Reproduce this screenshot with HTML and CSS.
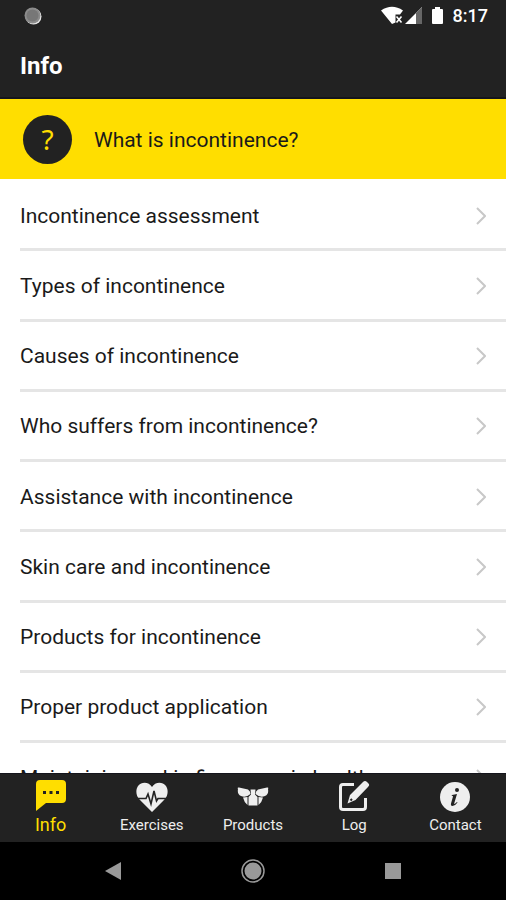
FILE: index.html
```html
<!DOCTYPE html>
<html lang="en">
<head>
<meta charset="utf-8">
<meta name="viewport" content="width=device-width, initial-scale=1">
<title>Info</title>
<link rel="stylesheet" href="styles.css">
</head>
<body>
<div class="app">
  <div class="status">
    <svg class="dot" width="20" height="20" viewBox="0 0 20 20" aria-hidden="true"><circle cx="10.500" cy="10.500" r="8" fill="#e6e6e6"/><circle cx="9.500" cy="9.500" r="8" fill="#8c8c8c"/><circle cx="9.500" cy="9.500" r="6" fill="#777"/></svg>
    <div class="status-icons">
      <svg width="64" height="22" viewBox="0 0 64 22" aria-hidden="true">
        <path d="M0 5.500Q11-2 22 5.500L19 9.500H14.500V17.500L11 19Z" fill="#fff"/>
        <path d="M15.500 11.500l5 6M20.500 11.500l-5 6" stroke="#fff" stroke-width="1.600"/>
        <path d="M24 19L41 2V19Z" fill="#fff"/><path d="M35 8L41 2V19H35Z" fill="#666"/>
        <path d="M54 2h5v2h2q1 0 1 1v13q0 1-1 1H52q-1 0-1-1V5q0-1 1-1h2Z" fill="#fff"/>
      </svg>
      <span class="clock">8:17</span>
    </div>
  </div>
  <header class="bar"><h1>Info</h1></header>
  <a class="feature" href="#what"><span class="badge">?</span><span>What is incontinence?</span></a>
  <main class="list">
    <a href="#assessment">Incontinence assessment<svg class="chev" viewBox="0 0 10 18"><path d="M1 1l8 8-8 8"/></svg></a>
    <a href="#types">Types of incontinence<svg class="chev" viewBox="0 0 10 18"><path d="M1 1l8 8-8 8"/></svg></a>
    <a href="#causes">Causes of incontinence<svg class="chev" viewBox="0 0 10 18"><path d="M1 1l8 8-8 8"/></svg></a>
    <a href="#who">Who suffers from incontinence?<svg class="chev" viewBox="0 0 10 18"><path d="M1 1l8 8-8 8"/></svg></a>
    <a href="#assistance">Assistance with incontinence<svg class="chev" viewBox="0 0 10 18"><path d="M1 1l8 8-8 8"/></svg></a>
    <a href="#skin">Skin care and incontinence<svg class="chev" viewBox="0 0 10 18"><path d="M1 1l8 8-8 8"/></svg></a>
    <a href="#products-for">Products for incontinence<svg class="chev" viewBox="0 0 10 18"><path d="M1 1l8 8-8 8"/></svg></a>
    <a href="#application">Proper product application<svg class="chev" viewBox="0 0 10 18"><path d="M1 1l8 8-8 8"/></svg></a>
    <a class="peek" href="#maintain">Maintaining a skin firm, even in health<svg class="chev" viewBox="0 0 10 18"><path d="M1 1l8 8-8 8"/></svg></a>
  </main>
  <nav class="tabs">
    <a class="active" href="#info"><svg viewBox="0 0 32 32"><path d="M5 0H27Q31 0 31 4V19Q31 23 27 23H11L1 31V4Q1 0 5 0Z" fill="#ffde00"/><path d="M8 11h3v3H8zM14.500 11h3v3h-3zM21 11h3v3h-3z" fill="#222"/></svg>Info</a>
    <a href="#exercises"><svg viewBox="0 0 32 32"><path d="M16 32L4 20C-1 15 0 9 2 6C6 1 13 2 16 7C19 2 26 1 30 6C32 9 33 15 28 20Z" fill="#eee"/><path d="M0 18.500H10L12 14L15 24L18 11L20.500 21L22 18.500H32" fill="none" stroke="#222" stroke-width="1.600"/></svg>Exercises</a>
    <a href="#products"><svg viewBox="0 0 32 32"><path d="M1 9Q0 7 2 7.500L11 9.500Q13.500 11 13.500 14Q9 18 4 16Q0 14 1 9ZM31 9Q32 7 30 7.500L21 9.500Q18.500 11 18.500 14Q23 18 28 16Q32 14 31 9Z" fill="#eee"/><path d="M13.500 9.500h5l-.5 5 2.500 2.500v8.500h-9V17l2.500-2.500Z" fill="#eee"/><path d="M6 17.500l4.500-.5v8Q7 22 6 17.500ZM26 17.500l-4.500-.5v8Q25 22 26 17.500Z" fill="#eee"/></svg>Products</a>
    <a href="#log"><svg viewBox="0 0 32 32"><path d="M16 4.500H5Q2.500 4.500 2.500 7V27Q2.500 29.500 5 29.500H25Q27.500 29.500 27.500 27V18" fill="none" stroke="#eee" stroke-width="3"/><path d="M9.500 23.500L12 15L25 2Q27 0 29 2L30.500 3.500Q32 5 30 7L17.500 20Z" fill="#eee"/><path d="M12.500 20.500l1.500-1.500" stroke="#222" stroke-width="2"/></svg>Log</a>
    <a href="#contact"><svg viewBox="0 0 32 32"><circle cx="16" cy="17" r="15" fill="#eee"/><circle cx="18" cy="10" r="2" fill="#222"/><path d="M13 15l5-1-3 10q1 0 3-2l.5.500Q16 26 13.500 26q-2 0-1.500-2.500l2-7q0-1-1.500-.800Z" fill="#222"/></svg>Contact</a>
  </nav>
  <div class="system">
    <button aria-label="Back"><svg viewBox="0 0 24 24"><path d="M4 12L20 3V21Z" fill="#999"/></svg></button>
    <button aria-label="Home"><svg viewBox="0 0 24 24"><circle cx="12" cy="12" r="11" fill="none" stroke="#999" stroke-width="1.500"/><circle cx="12" cy="12" r="8.500" fill="#999"/></svg></button>
    <button aria-label="Recent apps"><svg viewBox="0 0 24 24"><path d="M4 4h16v16H4z" fill="#999"/></svg></button>
  </div>
</div>
</body>
</html>
```

FILE: styles.css
```css
* { box-sizing: border-box; }
body { margin: 0; background: #fff; color: #1a1a1a; font-family: Roboto, "Liberation Sans", sans-serif; }
a { color: inherit; text-decoration: none; }
svg { display: block; flex: none; }
.app { display: flex; flex-direction: column; height: 100vh; }
.status { display: flex; justify-content: space-between; align-items: center; height: 32px; padding: 0 18px 0 23px; background: #222; }
.status-icons { display: flex; align-items: center; gap: 8px; }
.clock { color: #fff; font-size: 18px; font-weight: 500; line-height: 32px; }
.bar { display: flex; align-items: center; height: 67px; padding: 2px 20px 0; background: #222; border-bottom: 2px solid #15151c; }
.bar h1 { margin: 0; color: #fff; font-size: 24px; font-weight: 700; line-height: 32px; }
.feature { display: flex; align-items: center; gap: 22px; height: 80px; padding: 1px 23px 0; background: #ffde00; font-size: 21px; }
.badge { display: grid; place-items: center; width: 49px; height: 49px; border-radius: 50%; background: #222; color: #ffde00; font-family: "Noto Sans", sans-serif; font-size: 28px; line-height: 49px; }
.list { flex: 1; min-height: 0; display: grid; grid-template-rows: repeat(8, 1fr) 30px; padding: 2px 0 0 20px; overflow: hidden; font-size: 21px; }
.list a { display: flex; align-items: center; justify-content: space-between; padding: 2px 20px 0 0; border-bottom: 3px solid #e5e5e5; }
.list .peek { height: 70px; }
.chev { width: 10px; height: 18px; fill: none; stroke: #c8c8c8; stroke-width: 2; }
.tabs { display: grid; grid-template-columns: repeat(5, 1fr); height: 69px; background: #222; color: #eee; border-top: 1px solid #15151c; }
.tabs a { display: flex; flex-direction: column; align-items: center; gap: 3px; padding-top: 6px; font-size: 15px; line-height: 20px; }
.tabs svg { width: 32px; height: 32px; }
.tabs .active { color: #ffde00; font-size: 18px; }
.system { display: flex; justify-content: center; align-items: center; gap: 116px; height: 58px; background: #000; }
.system button { padding: 0; border: 0; background: none; }
.system svg { width: 24px; height: 24px; }
```
